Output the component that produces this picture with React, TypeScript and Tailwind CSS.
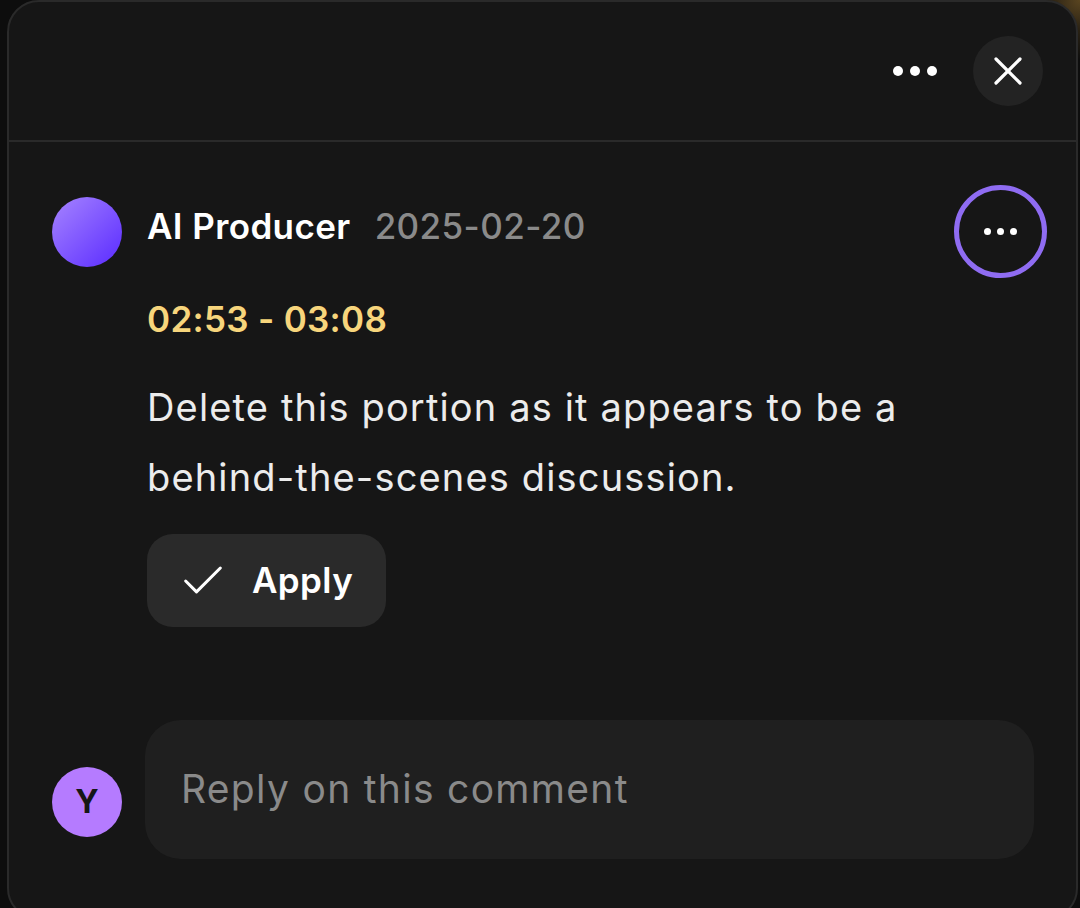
import { Check, X } from "lucide-react";

const Dots = ({ size = 8, gap = 9 }: { size?: number; gap?: number }) => (
    <div className="flex items-center" style={{ gap }}>
        {[0, 1, 2].map((i) => (
            <span key={i} className="rounded-full bg-white" style={{ width: size, height: size }} />
        ))}
    </div>
);

const App = () => {
    return (
        <div
            className="h-[908px] w-[1080px] overflow-hidden bg-[#0d0d0d] bg-[radial-gradient(circle_at_100%_0%,#5a4520_0px,#2a2214_30px,#0d0d0d_60px)] pl-[7px] font-['Inter','Noto_Sans',sans-serif]"
        >
            <div className="flex h-[920px] w-[1071px] flex-col rounded-[32px] border-2 border-[#2a2a2a] bg-[#161616]">
                {/* header */}
                <div className="flex h-[140px] shrink-0 items-center justify-end gap-[36px] border-b-2 border-[#2a2a2a] pr-[33px]">
                    <Dots size={10} gap={7} />
                    <button className="flex h-[70px] w-[70px] items-center justify-center rounded-full bg-[#232323] text-white">
                        <X size={48} strokeWidth={1.6} />
                    </button>
                </div>

                {/* comment */}
                <div className="flex flex-col pl-[43px] pr-[29px] pt-[43px]">
                    <div className="flex items-center justify-between">
                        <div className="flex items-center gap-[25px]">
                            <div className="h-[70px] w-[70px] rounded-full bg-[linear-gradient(135deg,#a684ff,#5a2bff)]" />
                            <div className="mb-[12px] flex items-baseline gap-[24px] text-[35px] leading-[44px] tracking-[0.4px]">
                                <span className="font-semibold text-white">AI Producer</span>
                                <span className="font-medium text-[#8a8a8a]">2025-02-20</span>
                            </div>
                        </div>
                        <button className="flex h-[93px] w-[93px] items-center justify-center rounded-full border-[5px] border-[#8f6cf2]">
                            <Dots size={7} gap={6} />
                        </button>
                    </div>

                    <div className="ml-[95px] flex flex-col items-start">
                        <div className="mt-[21px] text-[35px] leading-[40px] font-semibold tracking-[0.3px] text-[#f7d57c]">
                            02:53 - 03:08
                        </div>
                        <p className="mt-[33px] text-[38px] leading-[70px] tracking-[1.15px] text-[#ececec]">
                            Delete this portion as it appears to be a
                            <br />
                            behind-the-scenes discussion.
                        </p>
                        <button className="mt-[22px] flex h-[93px] items-center gap-[23px] rounded-[26px] bg-[#2a2a2a] pl-[30px] pr-[33px] text-[35px] font-semibold tracking-[0.4px] text-white">
                            <Check size={52} strokeWidth={1.4} />
                            Apply
                        </button>
                    </div>
                </div>

                {/* reply */}
                <div className="mt-[93px] flex items-center gap-[23px] pl-[43px] pr-[42px]">
                    <div className="mt-[24px] flex h-[70px] w-[70px] shrink-0 items-center justify-center rounded-full bg-[#b57bff] text-[32px] font-bold text-[#161616]">
                        Y
                    </div>
                    <div className="flex h-[139px] flex-1 items-center rounded-[36px] bg-[#1f1f1f] px-[36px] text-[39px] tracking-[1.3px] text-[#8a8a8a]">
                        Reply on this comment
                    </div>
                </div>
            </div>
        </div>
    );
};

export default App;
